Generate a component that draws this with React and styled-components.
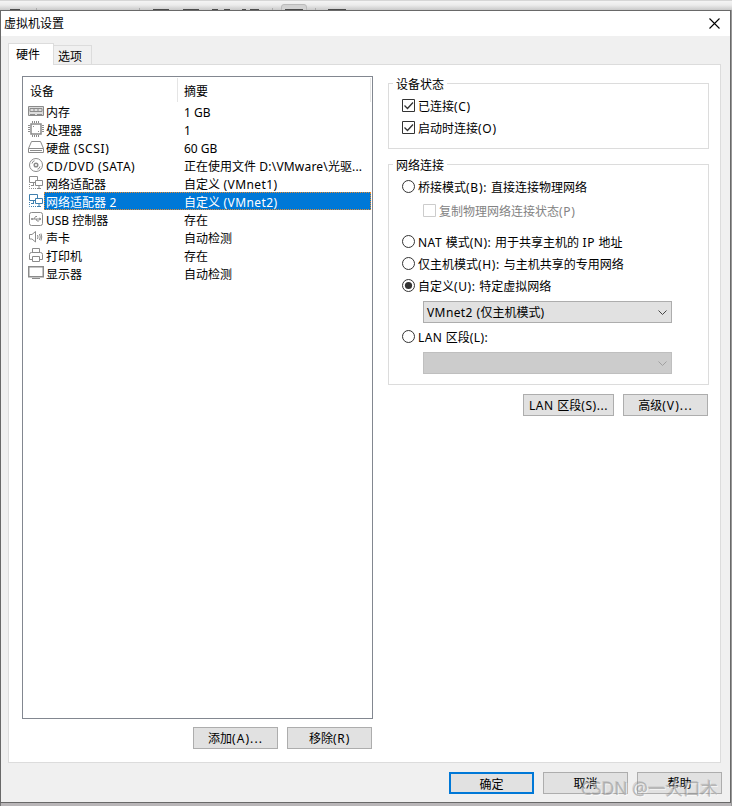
import React from 'react';
import styled, { createGlobalStyle, css } from 'styled-components';

const lineColor = '#dcdcdc';
const frameColor = '#696969';
const listBorder = '#828790';
const accentColor = '#0078d7';

const GlobalStyle = createGlobalStyle`
    * {
        box-sizing: border-box;
    }

    body {
        margin: 0;
        overflow: hidden;
        background: #b9b6b8;
        color: #000;
        font: 12px/18px 'Noto Sans', 'Noto Sans CJK SC', sans-serif;
    }
`;

const Desktop = styled.div`
    display: flex;
    flex-direction: column;
    width: 732px;
    height: 806px;
    background: linear-gradient(to right, #777 0 1px, #b9b6b8 1px 731px, #999 731px);
`;

const Toolbar = styled.svg`
    display: block;
    flex: none;
    width: 732px;
    height: 10px;
`;

const Dialog = styled.div`
    display: flex;
    flex-direction: column;
    width: 731px;
    height: 793px;
    background: #f0f0f0;
    border: 1px solid ${frameColor};
`;

const TitleBar = styled.div`
    display: flex;
    flex: none;
    align-items: center;
    justify-content: space-between;
    height: 25px;
    padding: 0 10px 0 3px;
    background: #fff;
`;

const CloseButton = styled.button`
    display: flex;
    padding: 0;
    border: 0;
    background: transparent;
`;

const Tabs = styled.div`
    display: flex;
    flex: none;
    align-items: flex-end;
    height: 28px;
    padding-left: 7px;
`;

const Tab = styled.div`
    width: 38px;
    height: 19px;
    padding: 2px 0 0 4px;
    border: 1px solid ${lineColor};
    border-width: 1px 1px 0 0;

    ${props => props.$active && css`
        z-index: 1;
        width: 46px;
        height: 22px;
        margin-bottom: -1px;
        padding: 2px 0 0 7px;
        border-left-width: 1px;
        background: #fff;
    `}
`;

const Page = styled.div`
    display: flex;
    flex: none;
    gap: 15px;
    width: 713px;
    height: 699px;
    margin-left: 7px;
    padding: 11px 11px 0 13px;
    background: #fff;
    border: 1px solid ${lineColor};
`;

const DevicePane = styled.div`
    width: 351px;
`;

const SettingsPane = styled.div`
    width: 321px;
    margin-top: -1px;
`;

const DeviceList = styled.div`
    height: 643px;
    border: 1px solid ${listBorder};
`;

const ListHeader = styled.div`
    display: flex;
    height: 25px;
    padding: 1px 1px 0 7px;
    line-height: 28px;
`;

const HeaderCell = styled.div`
    width: ${props => props.$width}px;
    height: 24px;
    padding-left: ${props => props.$indent || 0}px;
    border-right: 1px solid #e5e5e5;
`;

const DeviceRow = styled.div`
    display: flex;
    height: 18px;
    padding: 0 1px 0 5px;
`;

const DeviceIcon = styled.svg`
    flex: none;
    width: 16px;
    height: 16px;
    margin-top: 1px;
    fill: none;
    stroke: ${props => (props.$selected ? '#3f7fae' : '#8b8b8b')};
    overflow: visible;
`;

const DeviceLabel = styled.div`
    display: flex;
    flex: 1;
    height: 18px;
    padding-left: 2px;
    line-height: 21px;
    white-space: pre;

    ${props => props.$selected && css`
        color: #fff;
        background: ${accentColor};
        outline: 1px dotted #e58a2f;
        outline-offset: -1px;
    `}
`;

const DeviceName = styled.div`
    width: 138px;
`;

const Latin = styled.span`
    letter-spacing: ${props => props.$track}px;
`;

const ButtonRow = styled.div`
    display: flex;
    justify-content: flex-end;
    gap: 9px;
    padding-top: ${props => props.$top}px;
    padding-right: ${props => props.$right || 0}px;
`;

const Button = styled.button`
    width: ${props => props.$width || 85}px;
    height: 22px;
    padding: 2px 0 0;
    border: ${props => (props.$primary ? `2px solid ${accentColor}` : '1px solid #adadad')};
    background: #e1e1e1;
    color: #000;
    font: inherit;
    line-height: 18px;
    white-space: pre;
`;

const Group = styled.fieldset`
    height: ${props => props.$height}px;
    margin: 0 0 ${props => props.$gap || 0}px;
    padding: 0 0 0 13px;
    border: 1px solid ${lineColor};
    min-width: 0;
`;

const Legend = styled.legend`
    height: 17px;
    margin-left: -9px;
    padding: 0 3px;
    line-height: 20px;
`;

const GroupBody = styled.div`
    display: flex;
    flex-direction: column;
    padding-top: ${props => props.$top}px;
`;

const Option = styled.label`
    display: flex;
    align-items: center;
    gap: 3px;
    height: 22px;
    padding-top: 1px;
    margin-left: ${props => props.$indent || 0}px;
    margin-top: ${props => props.$top || 0}px;
    color: ${props => (props.$disabled ? '#838383' : '#000')};
    white-space: pre;
`;

const OptionText = styled.span`
    padding-top: 2px;
`;

const Mark = styled.svg`
    flex: none;
    width: 13px;
    height: 13px;
    fill: none;
    stroke: ${props => (props.$disabled ? '#ccc' : '#333')};
`;

const Select = styled.div`
    display: flex;
    flex: none;
    align-items: center;
    justify-content: space-between;
    width: 249px;
    height: 22px;
    margin: ${props => props.$top}px 0 0 21px;
    padding: 2px 4px 0 3px;
    border: 1px solid ${props => (props.$disabled ? '#bfbfbf' : '#adadad')};
    background: ${props => (props.$disabled ? '#ccc' : '#e1e1e1')};
    white-space: pre;
`;

const Footer = styled(ButtonRow)`
    position: relative;
`;

const Watermark = styled.div`
    position: absolute;
    right: 12px;
    top: 13px;
    color: rgba(150, 150, 150, 0.6);
    font-size: 17.5px;
    line-height: 24px;
    white-space: nowrap;
    text-shadow: 1px 1px 0 rgba(255, 255, 255, 0.6), -1px -1px 0 rgba(120, 120, 120, 0.25);
    pointer-events: none;
`;

const icons = {
    memory: (
        <>
            <path d="M.5 3.500h15v9H.5z" fill="#ddd" />
            <path d="M2 5.500h12v3H2zM2 11.500h5M9 11.500h5M6 5v4M10 5v4" />
        </>
    ),
    cpu: (
        <>
            <path d="M3 3h10v10H3z" strokeWidth="1.500" />
            <path d="M4.500 0v2M6.500 0v2M8.500 0v2M10.500 0v2M4.500 14v2M6.500 14v2M8.500 14v2M10.500 14v2M0 4.500h2M0 6.500h2M0 8.500h2M0 10.500h2M14 4.500h2M14 6.500h2M14 8.500h2M14 10.500h2" />
            <path d="M5 5.500h1M10 10.500h1" />
        </>
    ),
    disk: <path d="M.5 9.500l3-7h9l3 7v4H.5zM.5 9.500h15M2 11.500h12" />,
    disc: (
        <>
            <circle cx="8" cy="8" r="6.500" />
            <circle cx="8" cy="8" r="1.800" strokeWidth="1.500" />
            <path d="M4 6.500l1-2 1.500-.7M12 9.500l-1 2-1.500.7" />
        </>
    ),
    network: (
        <>
            <path d="M1.500 1.500h8v6h-8zM5.500 8v2M3 10.500h3" />
            <path d="M7.500 5.500h7v5h-7z" fill="#fff" />
            <path d="M11 11v2M9 13.500h4" />
            <path d="M1.500 9v4.500h7" strokeDasharray="1 1" />
        </>
    ),
    usb: (
        <>
            <rect x="1.500" y="1.500" width="13" height="13" rx="2" />
            <path d="M3.500 8h9M6 8l1.500-2.500H9M8 8l1 2h2M11 7l2 1-2 1M3.500 7.500h1v1h-1z" />
        </>
    ),
    sound: <path d="M1.500 5.500h2.500l3.500-3v10.500l-3.500-3H1.500zM9.500 6q1 2 0 4M11.500 5q1.500 3 0 6M13 4.500q1.500 3.500 0 7" />,
    printer: <path d="M4.500 5.500v-4h7v4M4.500 12.500h-3v-5q0-2 2-2h9q2 0 2 2v5h-3M4.500 9.500h7v5h-7z" />,
    display: (
        <>
            <path d="M.75 1.750h14.500v10H.75z" strokeWidth="1.500" />
            <path d="M4 13.500h8" />
        </>
    ),
};

const devices = [
    { icon: 'memory', name: '内存', summary: '1 GB', summaryTrack: 0 },
    { icon: 'cpu', name: '处理器', summary: '1' },
    { icon: 'disk', name: '硬盘 (SCSI)', track: 0.6, summary: '60 GB', summaryTrack: 0 },
    { icon: 'disc', name: 'CD/DVD (SATA)', track: 0.5, summary: '正在使用文件 D:\\VMware\\光驱...', summaryTrack: 0.2 },
    { icon: 'network', name: '网络适配器', summary: '自定义 (VMnet1)', summaryTrack: 0.4 },
    { icon: 'network', name: '网络适配器 2', summary: '自定义 (VMnet2)', summaryTrack: 0.4, selected: true },
    { icon: 'usb', name: 'USB 控制器', track: 0, summary: '存在' },
    { icon: 'sound', name: '声卡', summary: '自动检测' },
    { icon: 'printer', name: '打印机', summary: '存在' },
    { icon: 'display', name: '显示器', summary: '自动检测' },
];

// only the latin runs are tracked, the ideographs stay on a 12px step
const Label = ({ text, track = 0.7 }) =>
    text.split(/([\x20-\x7e]+)/).map((part, i) =>
        i % 2 ? <Latin key={i} $track={track}>{part}</Latin> : part
    );

const Checkbox = ({ text, checked, disabled, ...rest }) => (
    <Option $disabled={disabled} {...rest}>
        <Mark $disabled={disabled}>
            <path d="M.5.5h12v12H.5z" fill="#fff" />
            {checked && <path d="M2.500 6.500l3 3 5.500-6" strokeWidth="1.300" />}
        </Mark>
        <OptionText><Label text={text} /></OptionText>
    </Option>
);

const Radio = ({ text, checked, track, ...rest }) => (
    <Option {...rest}>
        <Mark>
            <circle cx="6.500" cy="6.500" r="6" />
            {checked && <circle cx="6.500" cy="6.500" r="3.600" fill="#333" stroke="none" />}
        </Mark>
        <OptionText><Label text={text} track={track} /></OptionText>
    </Option>
);

const Combo = ({ text, disabled, $top }) => (
    <Select $disabled={disabled} $top={$top}>
        <span><Label text={text} track={0.4} /></span>
        <svg width="9" height="6" fill="none" stroke={disabled ? '#a0a0a0' : '#444'}>
            <path d="M.5.5l4 4 4-4" />
        </svg>
    </Select>
);

const BackgroundToolbar = () => (
    <Toolbar viewBox="0 0 732 10">
        <defs>
            <linearGradient id="shade" x1="0" y1="0" x2="0" y2="1">
                <stop offset="0" stopColor="#f6f6f6" />
                <stop offset=".5" stopColor="#ececec" />
                <stop offset="1" stopColor="#c9c9c9" />
            </linearGradient>
        </defs>
        <path d="M0 0h732v10H0z" fill="url(#shade)" />
        <path d="M0 .5h732" stroke="#d6d6d6" />
        <path d="M281.500 10V7q0-2.500 2.500-2.500h20q2.500 0 2.500 2.500v3" fill="#d2d2d2" stroke="#bbb" />
        <path d="M36.500 8v2M139.500 8v2M272.500 8v2M315.500 8v2" stroke="#aaa" />
        <path d="M10 9.500h10M153 9.500h16M183 9.500h16M212 9.500h6M224 9.500h6M242 9.500h4M250 9.500h9M285 9.500h18M328 9.500h18" stroke="#4b4b4b" />
    </Toolbar>
);

export default function App() {
    return (
        <Desktop>
            <GlobalStyle />
            <BackgroundToolbar />
            <Dialog>
                <TitleBar>
                    <span>虚拟机设置</span>
                    <CloseButton aria-label="关闭">
                        <svg width="11" height="11" stroke="#000" strokeWidth="1.100">
                            <path d="M.5.5l10 10M10.500.5l-10 10" />
                        </svg>
                    </CloseButton>
                </TitleBar>
                <Tabs>
                    <Tab $active>硬件</Tab>
                    <Tab>选项</Tab>
                </Tabs>
                <Page>
                    <DevicePane>
                        <DeviceList>
                            <ListHeader>
                                <HeaderCell $width={148}>设备</HeaderCell>
                                <HeaderCell $width={193} $indent={6}>摘要</HeaderCell>
                            </ListHeader>
                            {devices.map(({ icon, name, summary, track = 0.35, summaryTrack = 0, selected }) => (
                                <DeviceRow key={name}>
                                    <DeviceIcon $selected={selected}>{icons[icon]}</DeviceIcon>
                                    <DeviceLabel $selected={selected}>
                                        <DeviceName><Label text={name} track={track} /></DeviceName>
                                        <span><Label text={summary} track={summaryTrack} /></span>
                                    </DeviceLabel>
                                </DeviceRow>
                            ))}
                        </DeviceList>
                        <ButtonRow $top={8} $right={1}>
                            <Button><Label text="添加(A)..." track={1.05} /></Button>
                            <Button><Label text="移除(R)" track={0.8} /></Button>
                        </ButtonRow>
                    </DevicePane>
                    <SettingsPane>
                        <Group $height={74} $gap={7}>
                            <Legend>设备状态</Legend>
                            <GroupBody $top={2}>
                                <Checkbox text="已连接(C)" checked />
                                <Checkbox text="启动时连接(O)" checked />
                            </GroupBody>
                        </Group>
                        <Group $height={229}>
                            <Legend>网络连接</Legend>
                            <GroupBody $top={2}>
                                <Radio text="桥接模式(B): 直接连接物理网络" track={0.75} />
                                <Checkbox text="复制物理网络连接状态(P)" disabled $indent={21} $top={2} />
                                <Radio text="NAT 模式(N): 用于共享主机的 IP 地址" track={0.5} $top={9} />
                                <Radio text="仅主机模式(H): 与主机共享的专用网络" track={0.65} />
                                <Radio text="自定义(U): 特定虚拟网络" track={0.6} checked />
                                <Combo text="VMnet2 (仅主机模式)" $top={5} />
                                <Radio text="LAN 区段(L):" track={0.4} $top={2} />
                                <Combo text="" disabled $top={5} />
                            </GroupBody>
                        </Group>
                        <ButtonRow $top={9} $right={1}>
                            <Button $width={91}><Label text="LAN 区段(S)..." track={0.55} /></Button>
                            <Button><Label text="高级(V)..." track={1.1} /></Button>
                        </ButtonRow>
                    </SettingsPane>
                </Page>
                <Footer $top={9} $right={8}>
                    <Button $primary>确定</Button>
                    <Button>取消</Button>
                    <Button>帮助</Button>
                    <Watermark>CSDN @一大口木</Watermark>
                </Footer>
            </Dialog>
        </Desktop>
    );
}
